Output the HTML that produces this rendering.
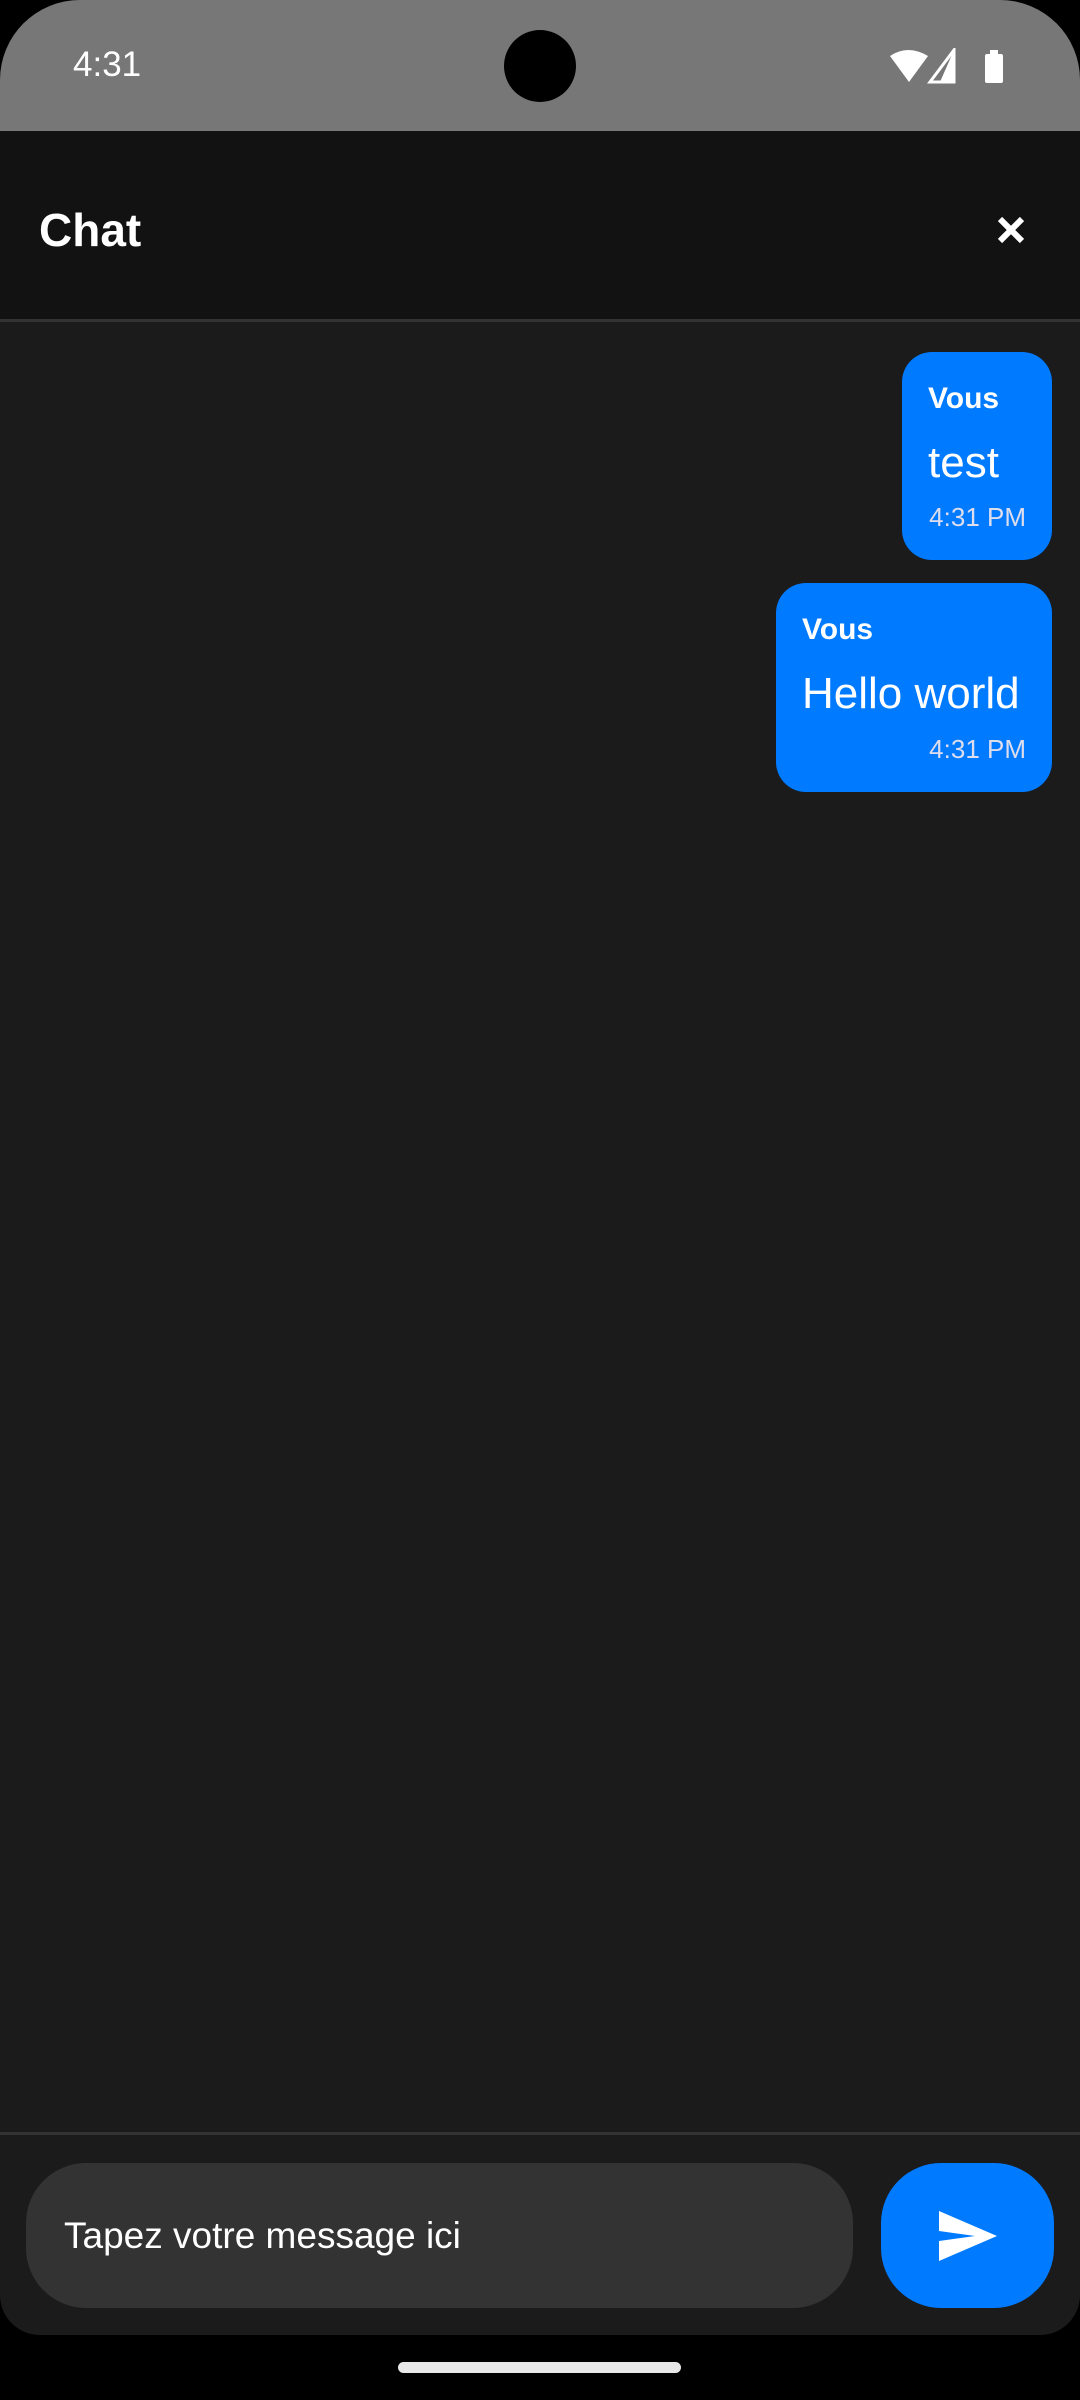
<!DOCTYPE html>
<html><head><meta charset="utf-8"><style>
*{margin:0;padding:0;box-sizing:border-box}
body{width:1080px;height:2400px;background:#000;position:relative;overflow:hidden;font-family:"Liberation Sans",sans-serif;color:#fff}
.screen{position:absolute;left:0;top:0;width:1080px;height:2335px;background:#1b1b1b;border-radius:80px 80px 40px 40px;overflow:hidden}
.status{position:absolute;left:0;top:0;width:1080px;height:131px;background:#777}
.time{position:absolute;left:73px;top:45px;font-size:35px}
.cam{position:absolute;left:504px;top:30px;width:72px;height:72px;border-radius:50%;background:#000}
.header{position:absolute;left:0;top:131px;width:1080px;height:191px;background:#121212;border-bottom:3px solid #333}
.title{position:absolute;left:39px;top:72px;font-size:46px;font-weight:bold}
.bubble{position:absolute;right:28px;background:#007aff;border-radius:30px;padding:0 26px}
.who{font-weight:bold;font-size:30px;position:absolute;left:26px}
.msg{font-size:44px;position:absolute;left:26px;white-space:nowrap}
.tm{font-size:26px;color:#dde;position:absolute;right:26px}
.bottomline{position:absolute;left:0;top:2132px;width:1080px;height:3px;background:#333}
.input{position:absolute;left:26px;top:2163px;width:827px;height:145px;border-radius:60px;background:#333;font-size:37px;padding-left:38px;line-height:145px}
.send{position:absolute;left:881px;top:2163px;width:173px;height:145px;border-radius:60px;background:#007aff}
.home{position:absolute;left:398px;top:2362px;width:283px;height:11px;border-radius:6px;background:#e8e8e8}
</style></head><body>
<div class="screen">
<div class="status">
<div class="time">4:31</div>
<div class="cam"></div>
<svg style="position:absolute;left:890px;top:48px" width="122" height="36" viewBox="0 0 122 36">
<path d="M0 8 Q18 -4 38 8 L19 34 Z" fill="#fff"/>
<path d="M64 2 L64 34 L40 34 Z" fill="none" stroke="#fff" stroke-width="3"/>
<path d="M64 2 L64 34 L50 34 Z" fill="#fff"/>
<rect x="95" y="6" width="18" height="29" rx="2" fill="#fff"/><rect x="100" y="2" width="8" height="5" fill="#fff"/>
</svg>
</div>
<div class="header">
<div class="title">Chat</div>
<svg style="position:absolute;left:996px;top:84px" width="30" height="30" viewBox="0 0 30 30"><path d="M4 4 L26 26 M26 4 L4 26" stroke="#fff" stroke-width="6"/></svg>
</div>
<div class="bubble" style="top:352px;width:150px;height:208px">
<div class="who" style="top:30px">Vous</div>
<div class="msg" style="top:86px">test</div>
<div class="tm" style="top:150px">4:31 PM</div>
</div>
<div class="bubble" style="top:583px;width:276px;height:209px">
<div class="who" style="top:30px">Vous</div>
<div class="msg" style="top:86px">Hello world</div>
<div class="tm" style="top:151px">4:31 PM</div>
</div>
<div class="bottomline"></div>
<div class="input">Tapez votre message ici</div>
<div class="send"><svg style="position:absolute;left:58px;top:48px" width="58" height="50" viewBox="0 0 58 50"><path d="M0 0 L58 25 L0 50 L0 30 L36 25 L0 20 Z" fill="#fff"/></svg></div>
</div>
<div class="home"></div>
</body></html>
